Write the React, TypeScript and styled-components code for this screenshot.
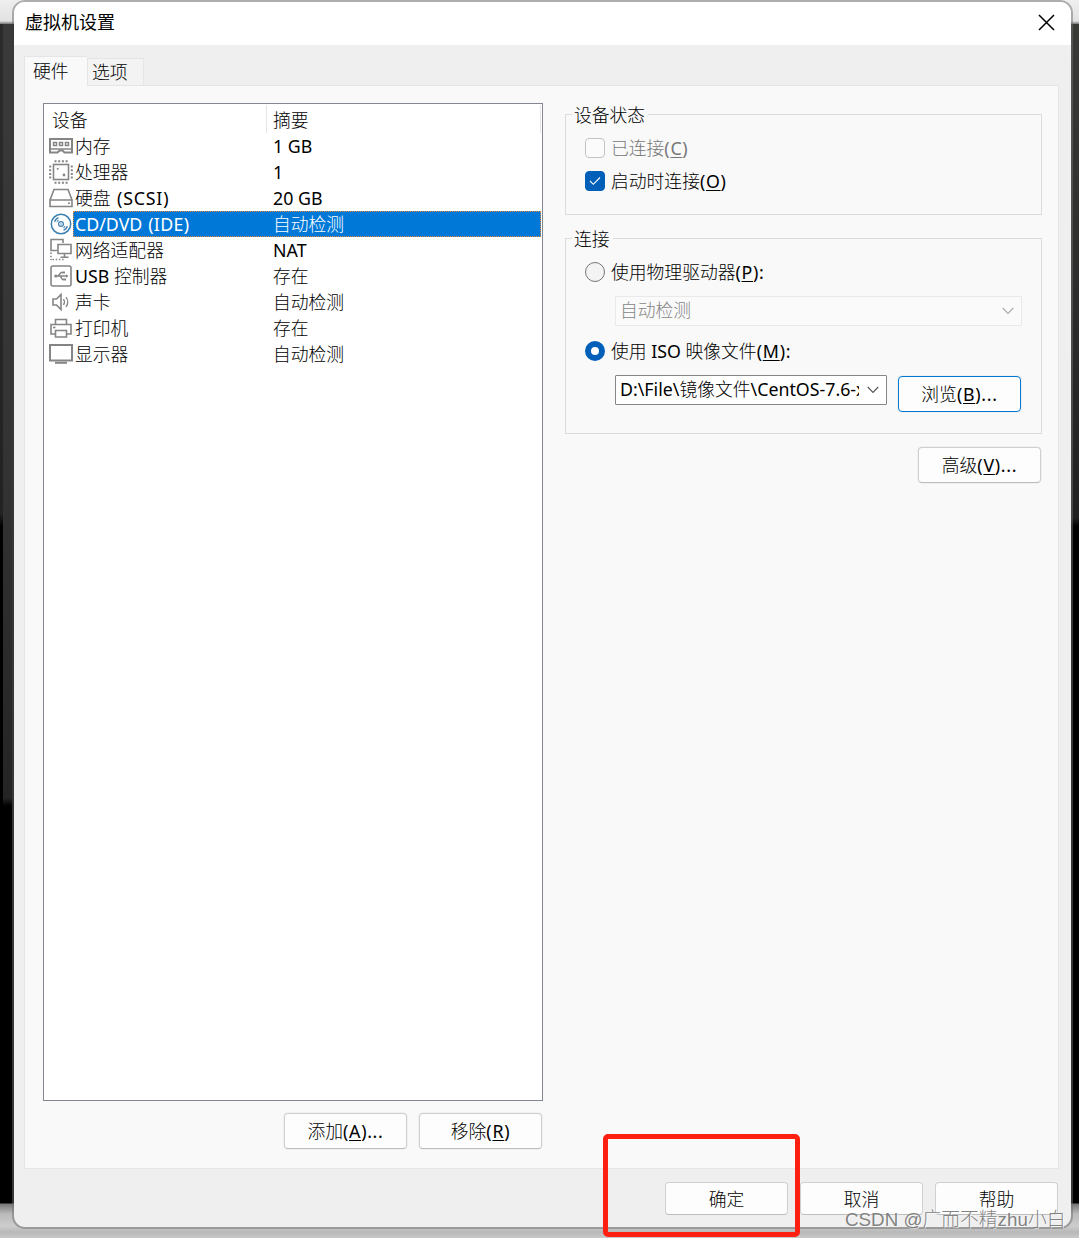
import React from "react";
import styled, { createGlobalStyle, css } from "styled-components";

const Global = createGlobalStyle`
  * { box-sizing: border-box; }
  html, body { margin: 0; padding: 0; }
  body { overflow: hidden; }
  u { text-decoration-thickness: 1px; text-underline-offset: 2px; }
`;

const Desktop = styled.div`
  position: relative;
  width: 1079px;
  height: 1238px;
  padding: 0 6px 9px 12px;
  background:
    linear-gradient(#2b2b2b, #222 490px, #000 502px) 0 24px / 3px 1179px no-repeat,
    linear-gradient(#3a3a3a, #333 450px, #242424 774px, #000 782px) 3px 24px / 9px 1179px no-repeat,
    linear-gradient(#393936, #2b2b2b 300px, #202020 494px, #000 502px) 1067px 24px / 12px 1179px no-repeat,
    linear-gradient(#efefef 0, #e2e2e2 21px, #777 24px, #000 24px, #000 1203px, #777 1204px, #bbb 1214px, #cdcdcd 1226px, #b8b8b8 1232px, #c8c8c8 1238px);
  font-family: "Noto Sans", "Noto Sans CJK SC", sans-serif;
  font-size: 17.8px;
  font-weight: 400;
  color: #000;
`;

const Dialog = styled.div`
  display: flex;
  flex-direction: column;
  width: 1061px;
  height: 1229px;
  border: 2px solid rgba(110, 110, 110, 0.5);
  border-radius: 13px;
  background: #efefef;
  background-clip: padding-box;
  overflow: hidden;
`;

const TitleBar = styled.div`
  display: flex;
  align-items: center;
  justify-content: space-between;
  flex: none;
  height: 43px;
  padding: 0 16px 3px 11px;
  background: #fff;
  font-family: "Noto Sans CJK SC", sans-serif;
  font-size: 18px;
`;

const TitleText = styled.span`
  padding-bottom: 2px;
`;

const Tabs = styled.div`
  display: flex;
  align-items: flex-end;
  height: 41px;
  margin: 0 0 -1px 10px;
  z-index: 1;
`;

const Tab = styled.div<{ $active?: boolean }>`
  display: flex;
  align-items: center;
  border: 1px solid #e5e5e5;
  font-family: "Noto Sans CJK SC", sans-serif;
  font-weight: 300;
  ${(p) =>
    p.$active
      ? css`width: 63px; height: 30px; padding: 0 0 3px 8px; background: #f9f9f9; border-bottom: 0; border-right: 0;`
      : css`width: 57px; height: 28px; padding: 0 0 2px 4px; background: #f3f3f3;`}
`;

const Panel = styled.div`
  display: flex;
  flex: none;
  gap: 22px;
  width: 1035px;
  height: 1084px;
  margin-left: 10px;
  padding: 17px 16px 0 18px;
  border: 1px solid #e5e5e5;
  background: #f9f9f9;
`;

const DeviceColumn = styled.div`
  width: 500px;
`;

const DeviceList = styled.div`
  height: 998px;
  border: 1px solid #828790;
  background: #fff;
`;

const Cjk = styled.span`
  font-family: "Noto Sans CJK SC", sans-serif;
  font-weight: 300;
  line-height: 0;
  letter-spacing: 0;
`;

const Spaced = styled.span<{ $gap?: number }>`
  letter-spacing: ${(p) => p.$gap ?? 0.7}px;
  word-spacing: 1px;
`;

const ListHeader = styled.div`
  display: flex;
  height: 29px;
  padding-top: 1px;
  line-height: 30px;
`;

const HeadCell = styled.div<{ $w: number; $pad: number }>`
  width: ${(p) => p.$w}px;
  padding-left: ${(p) => p.$pad}px;
  border-right: 1px solid #e5e5e5;
`;

const DeviceRow = styled.div`
  display: flex;
  height: 26px;
  line-height: 26px;
`;

const IconCell = styled.div`
  display: flex;
  align-items: center;
  justify-content: center;
  width: 25px;
  margin-left: 4px;
  flex: none;
`;

const RowBody = styled.div<{ $selected?: boolean }>`
  display: flex;
  flex: 1;
  margin-right: 1px;
  padding-left: 2px;
  white-space: pre;
  ${(p) =>
    p.$selected &&
    css`background: #0078d7; color: #fff; outline: 1px dotted #e28a3b; outline-offset: -1px;`}
`;

const DeviceName = styled.div`
  width: 198px;
`;

const ButtonRow = styled.div<{ $top?: number; $right?: number }>`
  display: flex;
  justify-content: flex-end;
  gap: 12px;
  margin-top: ${(p) => p.$top ?? 0}px;
  margin-right: ${(p) => p.$right ?? 0}px;
`;

const ButtonBox = styled.button<{ $primary?: boolean; $short?: boolean }>`
  display: flex;
  align-items: center;
  justify-content: center;
  flex: none;
  width: 123px;
  height: ${(p) => (p.$short ? 33 : 36)}px;
  padding: 0;
  border: 1px solid ${(p) => (p.$primary ? "#0078d4" : "#cfcfcf")};
  border-bottom-color: ${(p) => (p.$primary ? "#0078d4" : "#bdbdbd")};
  border-radius: 4px;
  background: #fdfdfd;
  box-shadow: 0 0 0 1px #f0f0f0;
  font: inherit;
  color: #000;
`;

const ButtonLabel = styled.span`
  letter-spacing: 0.7px;
`;

const Button = ({ children, ...rest }: { children: React.ReactNode; $primary?: boolean; $short?: boolean }) => (
  <ButtonBox {...rest}>
    <ButtonLabel>{children}</ButtonLabel>
  </ButtonBox>
);

const Settings = styled.div`
  display: flex;
  flex-direction: column;
  width: 477px;
  padding-top: 11px;
`;

const Group = styled.div<{ $h: number }>`
  display: flex;
  flex-direction: column;
  height: ${(p) => p.$h}px;
  margin-bottom: 23px;
  padding-left: 19px;
  border: 1px solid #dcdcdc;
  &:nth-child(2) { margin-bottom: 0; }
`;

const Legend = styled.div`
  align-self: flex-start;
  height: 24px;
  margin: -13px 0 0 -13px;
  padding: 0 3px 0 2px;
  background: #f9f9f9;
  line-height: 26px;
`;

const Option = styled.label<{ $top: number; $disabled?: boolean }>`
  display: flex;
  align-items: center;
  gap: 6px;
  height: 24px;
  margin-top: ${(p) => p.$top}px;
  white-space: pre;
  line-height: 24px;
  color: ${(p) => (p.$disabled ? "#777" : "#000")};
`;

const Check = styled.span<{ $on?: boolean }>`
  display: flex;
  align-items: center;
  justify-content: center;
  width: 20px;
  height: 20px;
  border: 1px solid ${(p) => (p.$on ? "#005fb8" : "#c3c3c3")};
  border-radius: 4px;
  background: ${(p) => (p.$on ? "#005fb8" : "#fbfbfb")};
`;

const Radio = styled.span<{ $on?: boolean }>`
  width: 20px;
  height: 20px;
  border: ${(p) => (p.$on ? "6px solid #005fb8" : "1px solid #757575")};
  border-radius: 50%;
  background: ${(p) => (p.$on ? "#fff" : "#f3f3f3")};
`;

const Combo = styled.div<{ $w: number; $disabled?: boolean }>`
  display: flex;
  align-items: center;
  justify-content: space-between;
  width: ${(p) => p.$w}px;
  height: 30px;
  padding: 0 7px 0 4px;
  border: 1px solid ${(p) => (p.$disabled ? "#e9e9e9" : "#868686")};
  border-radius: 1px;
  background: ${(p) => (p.$disabled ? "#fafafa" : "#fff")};
  color: ${(p) => (p.$disabled ? "#858585" : "#000")};
`;

const ComboText = styled.div<{ $clip?: boolean }>`
  width: 239px;
  height: 28px;
  line-height: 27px;
  white-space: nowrap;
  ${(p) => p.$clip && css`overflow: hidden;`}
`;

const Indent = styled.div<{ $top: number }>`
  display: flex;
  gap: 11px;
  margin: ${(p) => p.$top}px 0 0 30px;
`;

const BrowseSlot = styled.div`
  padding-top: 1px;
`;

const Footer = styled.div`
  padding: 13px 13px 0 0;
`;

const Highlight = styled.div`
  position: absolute;
  left: 603px;
  top: 1134px;
  width: 197px;
  height: 103px;
  border: 5px solid #ff2012;
  border-radius: 5px;
`;

const Watermark = styled.div`
  position: absolute;
  left: 845px;
  top: 1206px;
  font-family: "Liberation Sans", "Noto Sans CJK SC", sans-serif;
  font-size: 18.8px;
  font-weight: 300;
  line-height: 28px;
  white-space: nowrap;
  color: rgba(115, 115, 115, 0.9);
  text-shadow: 1px 1px 0 rgba(255, 255, 255, 0.6);
`;

const G = "#858585";

const Svg = ({ children, color = G, sw = 1.6 }: { children: React.ReactNode; color?: string; sw?: number }) => (
  <svg width="24" height="24" viewBox="0 0 24 24" fill="none" stroke={color} strokeWidth={sw}>
    {children}
  </svg>
);

const icons = {
  memory: (
    <Svg sw={2}>
      <path d="M1 5H23V18.5H15.5L13.5 16.5H10.5L8.5 18.5H1Z" />
      <path d="M1 15H23" strokeWidth="1.5" />
      <path d="M4.5 8.5H7.5V11.5H4.5ZM10.5 8.5H13.5V11.5H10.5ZM16.5 8.5H19.5V11.5H16.5Z" strokeWidth="1.5" />
    </Svg>
  ),
  cpu: (
    <Svg>
      <rect x="4.5" y="4.5" width="15" height="15" />
      <path d="M5.5 1.2H19M5.5 22.8H19" strokeWidth="2" strokeDasharray="2 1.7" />
      <path d="M1.2 5.5V19M22.8 5.5V19" strokeWidth="2" strokeDasharray="2 1.7" />
      <circle cx="8.7" cy="8.7" r="1" fill={G} stroke="none" />
      <circle cx="15" cy="15" r="1.4" fill={G} stroke="none" />
    </Svg>
  ),
  disk: (
    <Svg>
      <path d="M5 3.5H19L23 14V20.5H1V14ZM1 14H23" />
      <path d="M19 17.3H21" />
    </Svg>
  ),
  cd: (
    <Svg color="#3c7fb1" sw={1.5}>
      <circle cx="12" cy="12" r="9.7" />
      <circle cx="12" cy="12" r="2.4" strokeWidth="1.2" />
      <circle cx="12" cy="12" r="0.7" fill="#3c7fb1" stroke="none" />
      <path d="M5.6 9.8Q6.6 6.9 9.4 5.8M18.4 14.2Q17.4 17.1 14.6 18.2" />
      <path d="M8 9.8Q8.6 8.7 9.6 8.2M16 14.2Q15.4 15.3 14.4 15.8" strokeWidth="1.1" />
    </Svg>
  ),
  network: (
    <Svg>
      <path d="M8 12.5H2V1.5H14V5" />
      <path d="M9 6.5H22V15.5H9ZM15.5 15.5V19M11.5 19.2H19.5" />
      <path d="M2 14.5V22M3.5 21.5H15" strokeDasharray="1.5 1.7" />
    </Svg>
  ),
  usb: (
    <Svg>
      <rect x="2" y="2" width="20" height="20" rx="2" />
      <path d="M7 12H18M9 12L12 8.5H14M11 12L13.5 15.5H15" strokeWidth="1.3" />
      <circle cx="6.8" cy="12" r="1.6" fill={G} stroke="none" />
      <path d="M13.5 7.5H16V9.5H13.5ZM14.5 14.5H17V16.5H14.5ZM17 10.3L19.5 12L17 13.7Z" fill={G} stroke="none" />
    </Svg>
  ),
  sound: (
    <Svg>
      <path d="M4 9H7.5L12 4.5V19.5L7.5 15H4Z" />
      <path d="M14.5 9Q16.5 12 14.5 15M17 7Q20.5 12 17 17" strokeWidth="1.3" />
    </Svg>
  ),
  printer: (
    <Svg>
      <path d="M6.5 8.5V3.5H17.5V8.5M6 18H2V8.5H22V18H18" />
      <path d="M6.5 14.5H17.5V21H6.5Z" />
      <path d="M4 11.5H6.5" />
    </Svg>
  ),
  display: (
    <Svg sw={2}>
      <rect x="1" y="3" width="22" height="15.5" />
      <path d="M6 20.8H18" />
    </Svg>
  ),
};

const devices: { icon: keyof typeof icons; name: React.ReactNode; summary: React.ReactNode; selected?: boolean }[] = [
  { icon: "memory", name: <Cjk>内存</Cjk>, summary: "1 GB" },
  { icon: "cpu", name: <Cjk>处理器</Cjk>, summary: "1" },
  { icon: "disk", name: <><Cjk>硬盘</Cjk><Spaced $gap={0.8}> (SCSI)</Spaced></>, summary: "20 GB" },
  { icon: "cd", name: <>CD/DVD<Spaced $gap={0.3}> (IDE)</Spaced></>, summary: <Cjk>自动检测</Cjk>, selected: true },
  { icon: "network", name: <Cjk>网络适配器</Cjk>, summary: "NAT" },
  { icon: "usb", name: <>USB <Cjk>控制器</Cjk></>, summary: <Cjk>存在</Cjk> },
  { icon: "sound", name: <Cjk>声卡</Cjk>, summary: <Cjk>自动检测</Cjk> },
  { icon: "printer", name: <Cjk>打印机</Cjk>, summary: <Cjk>存在</Cjk> },
  { icon: "display", name: <Cjk>显示器</Cjk>, summary: <Cjk>自动检测</Cjk> },
];

const Chevron = ({ color }: { color: string }) => (
  <svg width="12" height="8" viewBox="0 0 12 8" fill="none" stroke={color} strokeWidth="1.1">
    <path d="M0.8 1L6 6.4L11.2 1" />
  </svg>
);

export default function App() {
  return (
    <>
      <Global />
      <Desktop>
        <Dialog>
          <TitleBar>
            <TitleText>虚拟机设置</TitleText>
            <svg width="17" height="17" viewBox="0 0 17 17" stroke="#000" strokeWidth="1.5">
              <path d="M1 1L16 16M16 1L1 16" />
            </svg>
          </TitleBar>
          <Tabs>
            <Tab $active>硬件</Tab>
            <Tab>选项</Tab>
          </Tabs>
          <Panel>
            <DeviceColumn>
              <DeviceList>
                <ListHeader>
                  <HeadCell $w={223} $pad={8}><Cjk>设备</Cjk></HeadCell>
                  <HeadCell $w={274} $pad={6}><Cjk>摘要</Cjk></HeadCell>
                </ListHeader>
                {devices.map((d) => (
                  <DeviceRow key={d.icon}>
                    <IconCell>{icons[d.icon]}</IconCell>
                    <RowBody $selected={d.selected}>
                      <DeviceName>{d.name}</DeviceName>
                      <div>{d.summary}</div>
                    </RowBody>
                  </DeviceRow>
                ))}
              </DeviceList>
              <ButtonRow $top={12} $right={1}>
                <Button><Cjk>添加</Cjk>(<u>A</u>)...</Button>
                <Button><Cjk>移除</Cjk>(<u>R</u>)</Button>
              </ButtonRow>
            </DeviceColumn>
            <Settings>
              <Group $h={101}>
                <Legend><Cjk>设备状态</Cjk></Legend>
                <Option $top={10} $disabled>
                  <Check />
                  <Spaced><Cjk>已连接</Cjk>(<u>C</u>)</Spaced>
                </Option>
                <Option $top={9}>
                  <Check $on>
                    <svg width="12" height="10" viewBox="0 0 12 10" fill="none" stroke="#fff" strokeWidth="1.1">
                      <path d="M1 5L4.3 8.3L11 1.5" />
                    </svg>
                  </Check>
                  <Spaced><Cjk>启动时连接</Cjk>(<u>O</u>)</Spaced>
                </Option>
              </Group>
              <Group $h={196}>
                <Legend><Cjk>连接</Cjk></Legend>
                <Option $top={10}>
                  <Radio />
                  <Spaced><Cjk>使用物理驱动器</Cjk>(<u>P</u>):</Spaced>
                </Option>
                <Indent $top={12}>
                  <Combo $w={407} $disabled>
                    <ComboText><Cjk>自动检测</Cjk></ComboText>
                    <Chevron color="#aaa" />
                  </Combo>
                </Indent>
                <Option $top={13}>
                  <Radio $on />
                  <span><Cjk>使用</Cjk> ISO <Cjk>映像文件</Cjk><Spaced $gap={0.8}>(<u>M</u>):</Spaced></span>
                </Option>
                <Indent $top={12}>
                  <Combo $w={272}>
                    <ComboText $clip>D:\File\<Cjk>镜像文件</Cjk>\CentOS-7.6-x86_64</ComboText>
                    <Chevron color="#555" />
                  </Combo>
                  <BrowseSlot>
                    <Button $primary><Cjk>浏览</Cjk>(<u>B</u>)...</Button>
                  </BrowseSlot>
                </Indent>
              </Group>
              <ButtonRow $top={13} $right={1}>
                <Button><Cjk>高级</Cjk>(<u>V</u>)...</Button>
              </ButtonRow>
            </Settings>
          </Panel>
          <Footer>
            <ButtonRow>
              <Button $short><Cjk>确定</Cjk></Button>
              <Button $short><Cjk>取消</Cjk></Button>
              <Button $short><Cjk>帮助</Cjk></Button>
            </ButtonRow>
          </Footer>
        </Dialog>
        <Highlight />
        <Watermark>CSDN @广而不精zhu小白</Watermark>
      </Desktop>
    </>
  );
}
